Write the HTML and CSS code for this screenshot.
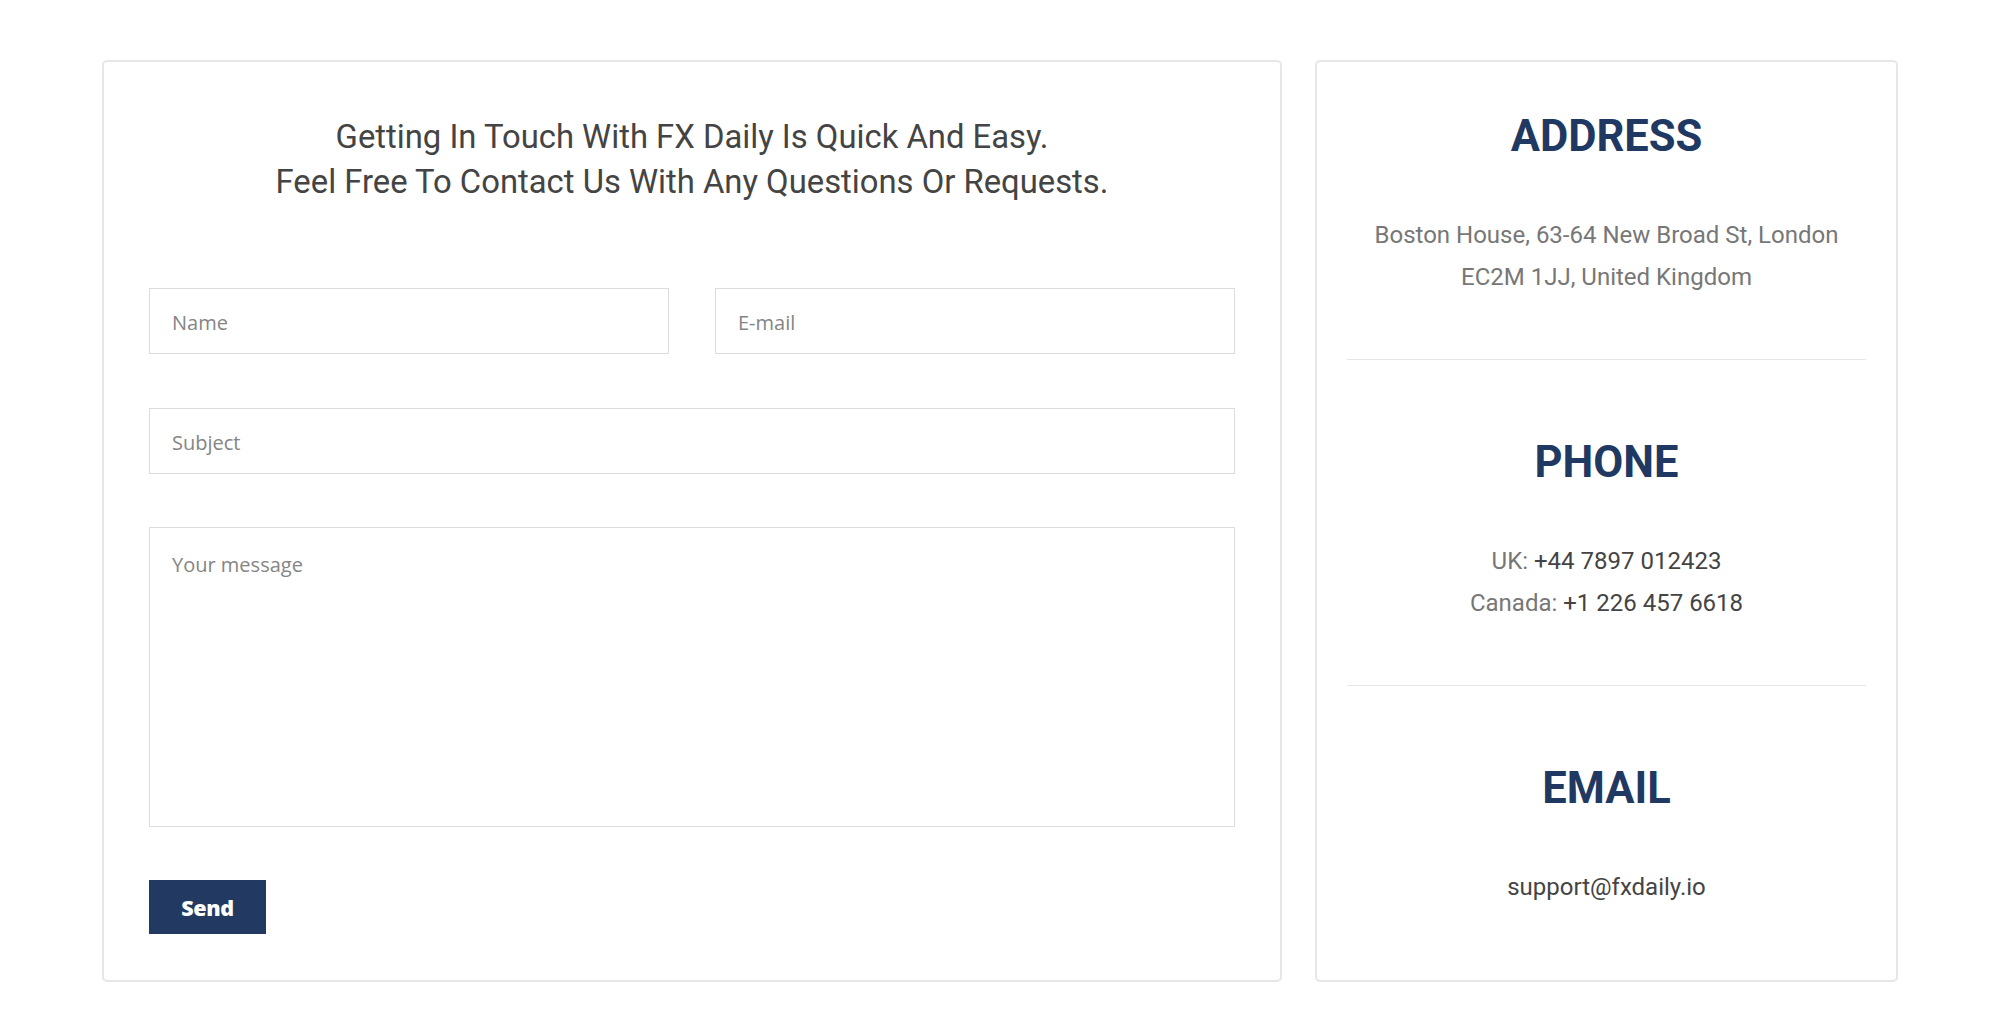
FILE: index.html
```html
<!DOCTYPE html>
<html lang="en">
<head>
<meta charset="utf-8">
<title>Contact - FX Daily</title>
<link rel="stylesheet" href="styles.css">
</head>
<body>
<main class="contact">
  <section class="card form-card">
    <h1 class="intro">Getting In Touch With FX Daily Is Quick And Easy.<br>Feel Free To Contact Us With Any Questions Or Requests.</h1>
    <form class="form">
      <div class="row two">
        <input class="field" type="text" placeholder="Name">
        <input class="field" type="email" placeholder="E-mail">
      </div>
      <input class="field" type="text" placeholder="Subject">
      <textarea class="field message" placeholder="Your message"></textarea>
      <div class="actions"><button type="button" class="send">Send</button></div>
    </form>
  </section>
  <aside class="card info-card">
    <div class="block">
      <h2 class="title">ADDRESS</h2>
      <p class="text">Boston House, 63-64 New Broad St, London<br>EC2M 1JJ, United Kingdom</p>
    </div>
    <div class="block">
      <h2 class="title">PHONE</h2>
      <p class="text">UK: <span class="dark">+44 7897 012423</span><br>Canada: <span class="dark">+1 226 457 6618</span></p>
    </div>
    <div class="block last">
      <h2 class="title">EMAIL</h2>
      <p class="text"><span class="dark">support@fxdaily.io</span></p>
    </div>
  </aside>
</main>
</body>
</html>
```
FILE: styles.css
```css
* { box-sizing: border-box; }
html, body { margin: 0; padding: 0; background: #fff; }
body { font-family: Roboto, "Liberation Sans", sans-serif; }

.contact {
  width: 1796px;
  margin: 60px 0 0 102px;
  display: flex;
  gap: 33px;
  align-items: stretch;
}

.card {
  border: 2px solid #e6e6e6;
  border-radius: 5px;
  background: #fff;
}

.form-card {
  width: 1180px;
  height: 922px;
  padding: 53px 45px 45px;
}

.intro {
  margin: 0;
  text-align: center;
  font-weight: 400;
  font-size: 32.8px;
  line-height: 45px;
  color: #444;
}

.form {
  margin-top: 83px;
  display: flex;
  flex-direction: column;
  gap: 54px;
}

.row.two {
  display: grid;
  grid-template-columns: 1fr 1fr;
  gap: 46px;
}

.field {
  display: block;
  width: 100%;
  height: 66px;
  border: 1px solid #dcdcdc;
  background: #fff;
  padding: 2px 22px 0;
  font-family: "Open Sans", "Noto Sans", sans-serif;
  font-size: 20px;
  color: #444;
  outline: none;
}

.field::placeholder { color: #858585; }

.message {
  height: 300px;
  padding-top: 23px;
  resize: none;
  margin-top: -1px;
}

.actions { margin-top: -1px; }

.send {
  width: 117px;
  height: 54px;
  border: 0;
  background: #223a62;
  color: #fff;
  font-family: "Open Sans", "Noto Sans", sans-serif;
  font-weight: 800;
  font-size: 21.5px;
  letter-spacing: -0.3px;
  cursor: pointer;
}

.info-card {
  width: 583px;
  padding: 49px 30px 0;
}

.block {
  text-align: center;
  padding: 77px 0 61px;
  border-bottom: 1px solid #e6e6e6;
}

.block:first-child { padding-top: 0; }
.block.last { border-bottom: 0; }

.title {
  margin: 0;
  font-weight: 700;
  font-size: 43.5px;
  line-height: 52px;
  color: #1f3962;
}

.text {
  margin: 51px 0 0;
  font-size: 24px;
  line-height: 42px;
  color: #777;
}

.dark { color: #444; }
```
